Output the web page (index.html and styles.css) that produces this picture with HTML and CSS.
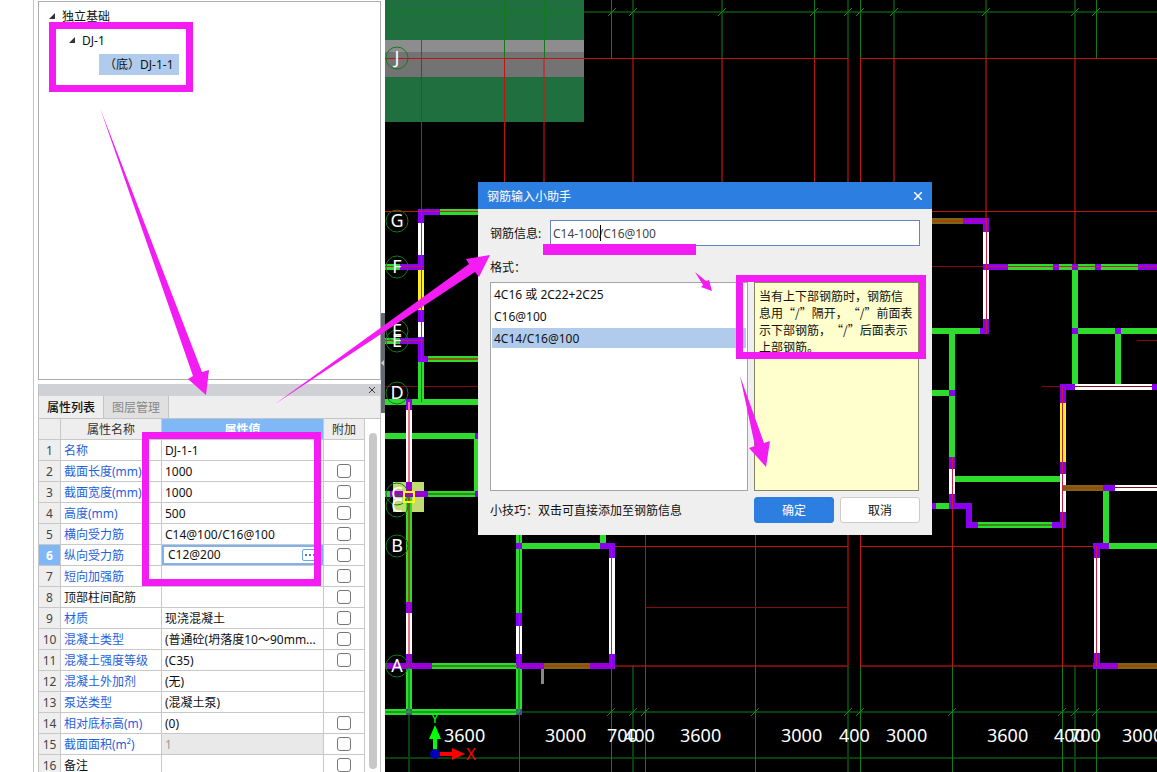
FILE: index.html
```html
<!DOCTYPE html>
<html lang="zh-CN">
<head>
<meta charset="UTF-8">
<meta name="viewport" content="width=device-width, initial-scale=1.0">
<title>钢筋输入小助手</title>
<link rel="stylesheet" href="styles.css">
</head>
<body>
<div class="app">
  <div class="sidebar">
    <div class="tree">
      <div class="node"><svg class="toggle" viewBox="0 0 6 6"><path d="M6 0V6H0Z"/></svg>独立基础</div>
      <div class="node level-2"><svg class="toggle" viewBox="0 0 6 6"><path d="M6 0V6H0Z"/></svg>DJ-1</div>
      <div class="node level-3"><span class="selected">（底）DJ-1-1</span></div>
    </div>

    <div class="props">
      <div class="props-bar"><button class="bar-close" aria-label="关闭面板"><svg viewBox="0 0 6 6"><path d="M0 0L6 6M6 0L0 6"/></svg></button></div>
      <div class="tabs">
        <button class="tab active">属性列表</button>
        <button class="tab">图层管理</button>
      </div>
      <div class="props-body">
        <table>
          <thead>
            <tr><th class="num"></th><th class="name">属性名称</th><th class="value current">属性值</th><th class="extra">附加</th></tr>
          </thead>
          <tbody>
            <tr><td class="num">1</td><td class="name">名称</td><td>DJ-1-1</td><td class="extra"></td></tr>
            <tr><td class="num">2</td><td class="name">截面长度(mm)</td><td>1000</td><td class="extra"><input type="checkbox" aria-label="截面长度附加"></td></tr>
            <tr><td class="num">3</td><td class="name">截面宽度(mm)</td><td>1000</td><td class="extra"><input type="checkbox" aria-label="截面宽度附加"></td></tr>
            <tr><td class="num">4</td><td class="name">高度(mm)</td><td>500</td><td class="extra"><input type="checkbox" aria-label="高度附加"></td></tr>
            <tr><td class="num">5</td><td class="name">横向受力筋</td><td>C14@100/C16@100</td><td class="extra"><input type="checkbox" aria-label="横向受力筋附加"></td></tr>
            <tr class="editing"><td class="num">6</td><td class="name">纵向受力筋</td><td class="edit"><div class="editor"><input type="text" value="C12@200" aria-label="纵向受力筋"><button class="more" aria-label="更多"><i></i><i></i><i></i></button></div></td><td class="extra"><input type="checkbox" aria-label="纵向受力筋附加"></td></tr>
            <tr><td class="num">7</td><td class="name">短向加强筋</td><td></td><td class="extra"><input type="checkbox" aria-label="短向加强筋附加"></td></tr>
            <tr><td class="num">8</td><td class="name plain">顶部柱间配筋</td><td></td><td class="extra"><input type="checkbox" aria-label="顶部柱间配筋附加"></td></tr>
            <tr><td class="num">9</td><td class="name">材质</td><td>现浇混凝土</td><td class="extra"><input type="checkbox" aria-label="材质附加"></td></tr>
            <tr><td class="num">10</td><td class="name">混凝土类型</td><td>(普通砼(坍落度10～90mm...</td><td class="extra"><input type="checkbox" aria-label="混凝土类型附加"></td></tr>
            <tr><td class="num">11</td><td class="name">混凝土强度等级</td><td>(C35)</td><td class="extra"><input type="checkbox" aria-label="混凝土强度等级附加"></td></tr>
            <tr><td class="num">12</td><td class="name">混凝土外加剂</td><td>(无)</td><td class="extra"></td></tr>
            <tr><td class="num">13</td><td class="name">泵送类型</td><td>(混凝土泵)</td><td class="extra"></td></tr>
            <tr><td class="num">14</td><td class="name">相对底标高(m)</td><td>(0)</td><td class="extra"><input type="checkbox" aria-label="相对底标高附加"></td></tr>
            <tr><td class="num">15</td><td class="name">截面面积(m²)</td><td class="readonly">1</td><td class="extra"><input type="checkbox" aria-label="截面面积附加"></td></tr>
            <tr><td class="num">16</td><td class="name plain">备注</td><td></td><td class="extra"><input type="checkbox" aria-label="备注附加"></td></tr>
          </tbody>
        </table>
        <div class="scrollbar"></div>
      </div>
    </div>
    <button class="collapse" aria-label="收起"></button>
  </div>

  <!-- drawing area -->
  <div class="canvas">
    <svg class="drawing">
      <g transform="translate(-385 0)">
        <rect x="385" y="0" width="199" height="122" fill="#1f6f3f"/>
        <rect x="385" y="40" width="199" height="12" fill="#8d8d8d"/>
        <rect x="385" y="52" width="199" height="25" fill="#737373"/>
        <rect x="393" y="482" width="31" height="30" fill="#c0dc70"/>

        <!-- axis grid -->
        <g class="crisp">
          <path class="axis-green" d="M421.5 0V58M504.5 0V58M544.5 0V58M611.5 0V58M814.5 0V58M860.5 0V58M1096.5 0V58M519.5 666V772M611.5 666V772M645.5 666V772M755.5 666V772M860.5 666V772M952.5 666V772M1062.5 666V772M1096.5 666V772"/>
          <path class="axis-green dim" d="M385 12H1157M633 0V58M722 0V58M848 0V58M894 0V58M986 0V58M1075 0V58M409 666V772M633 666V772M848 666V772M1075 666V772M385 712H1157M385 758H1157"/>
          <path class="axis-red" d="M385 58.5H848M860 58.5H1157M385 211.5H848M860 211.5H1157M421.5 58V402M504.5 58V211M814.5 58V211M860.5 58V666M645.5 500V666M755.5 500V666M952.5 500V666M1062.5 500V666M600 546.5H848M860 546.5H1100"/>
          <path class="axis-red dim" d="M544 58V211M633 58V211M722 58V211M848 58V666M894 58V211M986 58V331M1075 58V266M612 666H848M860 666H1100"/>
          <path class="axis-red thin" d="M385 386.5H478M645 607.5H848M932 266.5H986M1042 386.5H1062M1137 340.5H1157"/>
        </g>
        <path class="tick" d="M608 16l8-8M629 16l8-8M718 16l8-8M810 16l8-8M844 16l8-8M856 16l8-8M890 16l8-8M982 16l8-8M1071 16l8-8M1092 16l8-8M607 716l8-8M629 716l8-8M641 716l8-8M751 716l8-8M844 716l8-8M856 716l8-8M948 716l8-8M1058 716l8-8M1071 716l8-8M1092 716l8-8"/>

        <!-- walls -->
        <g class="walls crisp">
          <path class="green" d="M440 212H478M385 267H400M385 341H400M428 359H478M421 362V402M385 402H478M385 436H475M477 438V494M385 494H392M428 494H475M409 497V602M409 668V715M519 535V613M519 668V715M522 546H600M603 535V543M432 666H517M385 712H522"/>
          <path class="green" d="M932 331H980M1008 267H1138M1075 269V386M1075 331H1157M1118 334V386M952 334V457M932 393H950M953 479H1062M936 506H949M978 525H1052M1106 491V543M1109 546H1157"/>
          <path class="white" d="M421 223V255M421 322V337M409 410V482M409 613V654M519 626V654M612 558V654M986 232V319M1075 387H1152M1063 474V512M952 469V494M1115 488H1157M1097 558V653"/>
          <path class="yellow" d="M421 270V310M1063 403V462"/>
          <path class="brown" d="M544 666H590M932 221H963M1063 488H1103M1118 666H1157"/>
          <path class="purple" d="M418 212H440M421 209V223M421 255V270M400 267H424M421 310V322M421 337V362M400 341H424M418 359H428M409 399V410M475 436H478M409 482V497M390 494H428M475 494H478M409 602V613M409 654V668M516 546H522M519 613V626M519 654V668M600 546H615M612 543V558M612 654V668M385 666H432M517 666H544M590 666H615"/>
          <path class="purple" d="M963 221H989M986 218V232M986 264V270M986 319V334M980 331H989M986 267H1008M1053 267H1059M1072 267H1078M1095 267H1101M1138 267H1157M1072 331H1078M1115 331H1121M1060 387H1075M1152 387H1157M1063 384V403M1063 462V474M1063 512V527M949 393H955M952 457V469M952 494V508M932 506H936M949 506H972M969 503V527M966 525H978M1052 525H1066M1103 488H1115M1093 546H1109M1097 543V558M1097 653V669M1093 666H1118"/>
          <path class="slate" d="M406 712H412M516 712H522"/>
        </g>
        <!-- axis lines drawn over the walls -->
        <g class="crisp">
          <path class="over red" d="M418 211.5H478M421.5 209V402M385 266.5H424M385 340.5H424M519.5 535V668M611.5 546V666M986.5 218V334M986 266.5H1157M952.5 457V508M1062.5 387V527M1096.5 546V666"/>
          <path class="over rose" d="M409 402V482M409 613V654"/>
          <path class="over dark" d="M428 359H478M409 497V602"/>
          <path class="over maroon" d="M1075 386.5H1152M1115 487.5H1157"/>
          <path class="over magenta" d="M409 482V497M390 494H424M409 602V613M409 654V668M385 666H432M517 666H544M590 666H612M963 221H986M1097 666H1118"/>
          <path class="over moss" d="M428 494H475M432 666H517M978 525H1052"/>
          <path class="over rust" d="M544 666H590M932 221H963M1063 488H1103M1118 666H1157"/>
          <path class="over leaf" d="M409 668V712M519 668V712M385 712H519"/>
        </g>
        <rect x="541" y="669" width="3" height="15" fill="#888"/>

        <g class="bubble">
          <circle cx="397" cy="58" r="11"/><circle cx="397" cy="221" r="11"/><circle cx="397" cy="267" r="11"/><circle cx="397" cy="331" r="11"/><circle cx="397" cy="341" r="11"/><circle cx="397" cy="393" r="11"/><circle cx="397" cy="494" r="11"/><circle cx="397" cy="506" r="11"/><circle cx="397" cy="546" r="11"/><circle cx="397" cy="666" r="11"/>
        </g>
        <g class="axis-name">
          <text x="397" y="64">J</text>
          <text x="397" y="227">G</text>
          <text x="397" y="273">F</text>
          <text x="397" y="337">E</text>
          <text x="397" y="347">E</text>
          <text x="397" y="399">D</text>
          <text x="397" y="500">C</text>
          <text x="397" y="512">C</text>
          <text x="397" y="552">B</text>
          <text x="397" y="672">A</text>
        </g>
        <rect x="404" y="492" width="10" height="10" fill="none" stroke="#ff0" stroke-width="2"/>

        <g class="dims">
          <text x="444" y="742">3600</text>
          <text x="545" y="742">3000</text>
          <text x="607" y="742">700</text>
          <text x="624" y="742">400</text>
          <text x="680" y="742">3600</text>
          <text x="781" y="742">3000</text>
          <text x="839" y="742">400</text>
          <text x="886" y="742">3000</text>
          <text x="987" y="742">3600</text>
          <text x="1054" y="742">400</text>
          <text x="1070" y="742">700</text>
          <text x="1122" y="742">3000</text>
        </g>

        <!-- coordinate system marker -->
        <path d="M433 752V739H429L435 725L441 739H437V752Z" fill="#0f0"/>
        <path d="M438 752H452V748L465 754L452 760V756H438Z" fill="#f00"/>
        <circle cx="435" cy="754" r="5" fill="#0000b8"/>
        <text class="ucs" x="435" y="723" fill="#0f0">Y</text>
        <text class="ucs big" x="471" y="760" fill="#f00">X</text>
      </g>
    </svg>
  </div>

  <div class="dialog" role="dialog" aria-label="钢筋输入小助手">
    <div class="dialog-title">
      <span>钢筋输入小助手</span>
      <button class="dialog-close" aria-label="关闭"><svg viewBox="0 0 8 8"><path d="M0 0L8 8M8 0L0 8"/></svg></button>
    </div>
    <div class="dialog-body">
      <div class="field">
        <label for="rebar">钢筋信息:</label>
        <div class="rebar-input">
          <input type="text" id="rebar" value="C14-100/C16@100">
          <span class="caret"></span>
        </div>
      </div>
      <div class="format-label">格式：</div>
      <div class="format">
        <ul class="format-list">
          <li>4C16 或 2C22+2C25</li>
          <li>C16@100</li>
          <li class="selected">4C14/C16@100</li>
        </ul>
        <p class="hint">当有上下部钢筋时，钢筋信息用“/”隔开，“/”前面表示下部钢筋，“/”后面表示上部钢筋。</p>
      </div>
      <div class="dialog-footer">
        <span>小技巧：双击可直接添加至钢筋信息</span>
        <button class="btn primary">确定</button>
        <button class="btn">取消</button>
      </div>
    </div>
  </div>

  <!-- annotations on top of everything -->
  <svg class="marks">
    <g class="frames">
      <rect x="52.5" y="25.5" width="137" height="63"/>
      <rect x="145.5" y="435.5" width="172" height="147"/>
      <rect x="739.5" y="278.5" width="183" height="77"/>
    </g>
    <rect x="543" y="244" width="153" height="11"/>
    <path d="M100 108L193 376L188 379L206 395L209 370L202 372Z"/>
    <path d="M275 404L469 264L466 259L490 255L479 277L475 272Z"/>
    <path d="M695 272L706 281L709 280L712 291L701 287L703 285Z"/>
    <path d="M740 376L764 443L770 441L766 467L749 448L755 446Z"/>
  </svg>
</div>
</body>
</html>
```
FILE: styles.css
```css
* {
  box-sizing: border-box;
}

body {
  margin: 0;
  font-family: "Noto Sans", "Noto Sans CJK SC", sans-serif;
  font-size: 12px;
  color: #111;
  background-color: #fff;
}

button, input {
  font: inherit;
  color: inherit;
  margin: 0;
  padding: 0;
}

.app {
  position: relative;
  display: flex;
  height: 100vh;
  overflow: hidden;
}

/* left side */
.sidebar {
  position: relative;
  display: flex;
  flex-direction: column;
  gap: 4px;
  flex: none;
  width: 352px;
  margin-left: 33px;
  padding: 1px 4px 0 4px;
  border-left: 1px solid #c4c4c4;
}

.tree {
  flex: none;
  height: 379px;
  padding: 2px 0 0 10px;
  border: 1px solid #adadad;
}

.node {
  display: flex;
  align-items: center;
  height: 24px;
}

.level-2 {
  padding-left: 20px;
}

.level-3 {
  padding-left: 50px;
}

.toggle {
  width: 6px;
  height: 6px;
  margin-right: 7px;
  fill: #333;
}

.node .selected {
  height: 21px;
  padding: 0 5px;
  line-height: 21px;
  background-color: #b0cbeb;
}

.props {
  flex: 1;
  min-height: 0;
  overflow: hidden;
  border: solid #c4c4c4;
  border-width: 0 1px;
}

.props-bar {
  display: flex;
  justify-content: flex-end;
  height: 12px;
  background-color: #d0d1d6;
}

.bar-close {
  display: flex;
  align-items: center;
  justify-content: center;
  width: 16px;
  height: 12px;
  border: none;
  background: none;
}

.bar-close svg {
  width: 6px;
  height: 6px;
  stroke: #444;
}

.tabs {
  display: flex;
  height: 22px;
  background-color: #eee;
}

.tab {
  width: 65px;
  border: none;
  border-right: 1px solid #c4c4c4;
  background-color: #eee;
}

.tab.active {
  font-weight: 500;
}

.tab:not(.active) {
  background-color: #e0e0e0;
  color: #888;
}

.props-body {
  display: flex;
  border-top: 1px solid #c4c4c4;
}

/* property table */
table {
  width: 326px;
  flex: none;
  table-layout: fixed;
  border-collapse: separate;
  border-spacing: 0;
}

th, td {
  height: 21px;
  padding: 2px 0 0 3px;
  border: solid #c8c8c8;
  border-width: 0 1px 1px 0;
  line-height: 18px;
  text-align: left;
  font-weight: normal;
  white-space: nowrap;
}

th {
  padding: 2px 0 0;
  text-align: center;
  background-color: #eee;
  color: #333;
}

th.current {
  background-color: #7fb7f7;
  color: #fff;
  font-weight: bold;
}

th.num {
  width: 22px;
}

th.name {
  width: 101px;
}

th.extra {
  width: 41px;
}

td.num {
  padding: 2px 0 0;
  text-align: center;
  background-color: #eee;
  color: #444;
}

td.name {
  color: #1f5fdc;
}

td.name.plain {
  color: #111;
}

td.extra {
  padding: 0;
  text-align: center;
}

td.readonly {
  background-color: #e9e9e9;
  color: #999;
}

td input[type="checkbox"] {
  appearance: none;
  display: block;
  width: 14px;
  height: 14px;
  margin: 0 auto;
  border: 1px solid #777;
  border-radius: 3px;
  background-color: #fff;
}

.editing td.num {
  background-color: #7fb7f7;
  color: #fff;
  font-weight: bold;
}

td.edit {
  padding: 0;
}

.editor {
  display: flex;
  align-items: center;
  height: 20px;
  padding: 0 4px;
  border: 2px solid #7db2ee;
}

.editor input {
  flex: 1;
  min-width: 0;
  height: 16px;
  border: none;
  outline: none;
}

.more {
  display: flex;
  align-items: center;
  justify-content: center;
  gap: 2px;
  width: 15px;
  height: 12px;
  border: 1px solid #6ea4e2;
  border-radius: 2px;
  background-color: #fff;
}

.more i {
  width: 2px;
  height: 2px;
  background-color: #3c82d6;
}

.scrollbar {
  width: 8px;
  height: 336px;
  margin: 14px 0 0 4px;
  border-radius: 4px;
  background-color: #c8c8c8;
}

.collapse {
  position: absolute;
  top: 313px;
  right: 0;
  width: 4px;
  height: 100px;
  border: none;
  background-color: #626973;
}

.collapse::before {
  content: "";
  position: absolute;
  top: 47px;
  left: 0;
  border: solid transparent;
  border-width: 3px 3px 3px 0;
  border-right-color: #ccc;
}

/* drawing */
.canvas {
  flex: 1;
  min-width: 0;
  background-color: #000;
}

.drawing {
  display: block;
  width: 100%;
  height: 100%;
}

.crisp {
  shape-rendering: crispEdges;
}

.drawing path {
  stroke-width: 1;
}

.axis-green {
  stroke: #107a1c;
}

.drawing .axis-green.dim {
  stroke: rgba(16, 128, 28, 0.5);
  stroke-width: 2;
}

.axis-red {
  stroke: #c01414;
}

.drawing .axis-red.dim {
  stroke: rgba(215, 20, 20, 0.55);
  stroke-width: 2;
}

.axis-red.thin {
  stroke: #840c0c;
}

.tick {
  stroke: #138a13;
}

.drawing .walls path {
  stroke-width: 6;
}

.green { stroke: #2edc2e; }
.white { stroke: #fff; }
.yellow { stroke: #ffee20; }
.brown { stroke: #7c641c; }
.purple { stroke: #8a00f0; }
.slate { stroke: #50489c; }

.drawing .over {
  stroke-width: 2;
}

.drawing .over.red {
  stroke: #c81c3c;
  stroke-width: 1;
}

.drawing .over.maroon {
  stroke: #7c1020;
  stroke-width: 1;
}

.over.rose { stroke: #ec7484; }
.over.dark { stroke: #8a5a14; }
.over.magenta { stroke: #b000b4; }
.over.moss { stroke: #358c1c; }
.over.rust { stroke: #a04800; }
.over.leaf { stroke: #12a41c; }

.bubble {
  fill: none;
  stroke: #107a1c;
}

.axis-name {
  fill: #fff;
  font-size: 18px;
  text-anchor: middle;
}

.dims {
  fill: #fff;
  font-size: 18px;
}

.ucs {
  font-size: 14px;
  text-anchor: middle;
}

.ucs.big {
  font-size: 17px;
}

/* dialog */
.dialog {
  position: absolute;
  top: 182px;
  left: 478px;
  width: 454px;
  background-color: #efefef;
}

.dialog-title {
  display: flex;
  align-items: center;
  justify-content: space-between;
  height: 27px;
  padding: 0 6px 0 9px;
  background-color: #2c7fe0;
  color: #fff;
}

.dialog-close {
  display: flex;
  align-items: center;
  justify-content: center;
  width: 16px;
  height: 16px;
  border: none;
  background: none;
}

.dialog-close svg {
  width: 8px;
  height: 8px;
  fill: none;
  stroke: #fff;
}

.dialog-close path {
  stroke-width: 1.5;
}

.dialog-body {
  padding: 11px 12px 12px;
}

.field {
  display: flex;
  align-items: center;
}

.field label {
  width: 60px;
}

.rebar-input {
  position: relative;
  flex: 1;
}

.rebar-input input {
  display: block;
  width: 100%;
  height: 26px;
  padding: 0 2px;
  border: 1px solid #6484c4;
  outline: none;
  background-color: #fff;
  color: #444;
}

.caret {
  position: absolute;
  top: 5px;
  left: 50px;
  width: 1px;
  height: 16px;
  background-color: #000;
}

.format-label {
  height: 36px;
  padding-top: 6px;
  line-height: 32px;
}

.format {
  display: flex;
  gap: 6px;
  height: 209px;
  padding-right: 1px;
}

.format-list {
  flex: 1;
  margin: 0;
  padding: 1px;
  list-style: none;
  border: 1px solid #a4a4a4;
  background-color: #fff;
}

.format-list li {
  height: 20px;
  margin-bottom: 2px;
  padding-left: 2px;
  line-height: 21px;
}

.format-list .selected {
  background-color: #b0cbeb;
}

.hint {
  width: 165px;
  margin: 0;
  padding: 4px;
  border: 1px solid #85855f;
  background-color: #ffffcd;
  font-family: "Noto Sans CJK SC", sans-serif;
  line-height: 17px;
  text-spacing-trim: space-all;
}

.dialog-footer {
  display: flex;
  align-items: center;
  gap: 6px;
  padding-top: 6px;
}

.dialog-footer span {
  flex: 1;
}

.btn {
  width: 80px;
  height: 26px;
  border: 1px solid #ccc;
  border-radius: 3px;
  background-color: #fff;
}

.btn.primary {
  border-color: #2c7fe0;
  background-color: #2c7fe0;
  color: #fff;
}

/* annotations */
.marks {
  position: absolute;
  top: 0;
  left: 0;
  width: 100%;
  height: 100%;
  fill: #f31cf3;
  pointer-events: none;
}

.frames {
  fill: none;
  stroke: #f31cf3;
  stroke-width: 7;
}
```
